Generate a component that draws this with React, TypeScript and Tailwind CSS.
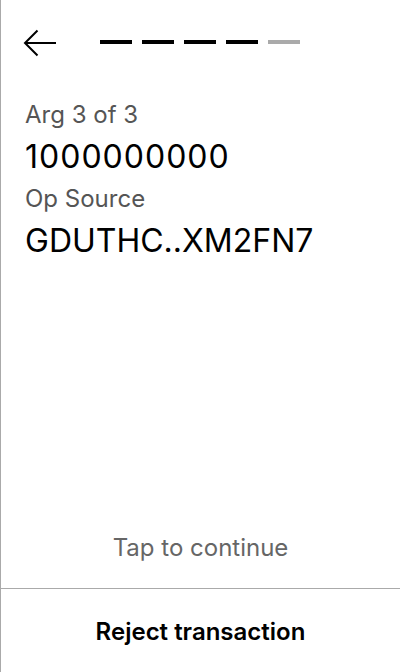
const steps = [true, true, true, true, false];

function BackArrow() {
  return (
    <svg width="34" height="28" viewBox="0 0 34 28" fill="none">
      <path d="M33 14H2M14.5 1.5 2 14l12.5 12.5" stroke="black" strokeWidth="2" />
    </svg>
  );
}

export default function App() {
  return (
    <div
      className="flex h-[672px] w-[400px] flex-col border-l border-[#aaaaaa] bg-white text-black"
      style={{ fontFamily: "Inter, 'Noto Sans', sans-serif" }}
    >
      <div className="flex h-[86px] items-center pl-[22px]">
        <BackArrow />
        <div className="mb-[2px] ml-[43px] flex gap-[10px]">
          {steps.map((done, i) => (
            <div
              key={i}
              className={done ? "h-1 w-8 bg-black" : "h-1 w-8 bg-[#aaaaaa]"}
            />
          ))}
        </div>
      </div>

      <div className="flex flex-col px-6 pt-[13px]">
        <div className="text-[24px] leading-[32px] text-[#555555]">Arg 3 of 3</div>
        <div className="text-[32px] leading-[52px] tracking-[1px]">1000000000</div>
        <div className="text-[24px] leading-[32px] text-[#555555]">Op Source</div>
        <div className="text-[32px] leading-[52px]">GDUTHC..XM2FN7</div>
      </div>

      <div className="flex-1" />

      <div className="pb-[22px] text-center text-[24px] leading-[36px] text-[#666666]">
        Tap to continue
      </div>
      <div className="border-t border-[#aaaaaa]" />
      <button className="h-[83px] w-full pt-[3px] text-[24px] font-semibold text-black">
        Reject transaction
      </button>
    </div>
  );
}
